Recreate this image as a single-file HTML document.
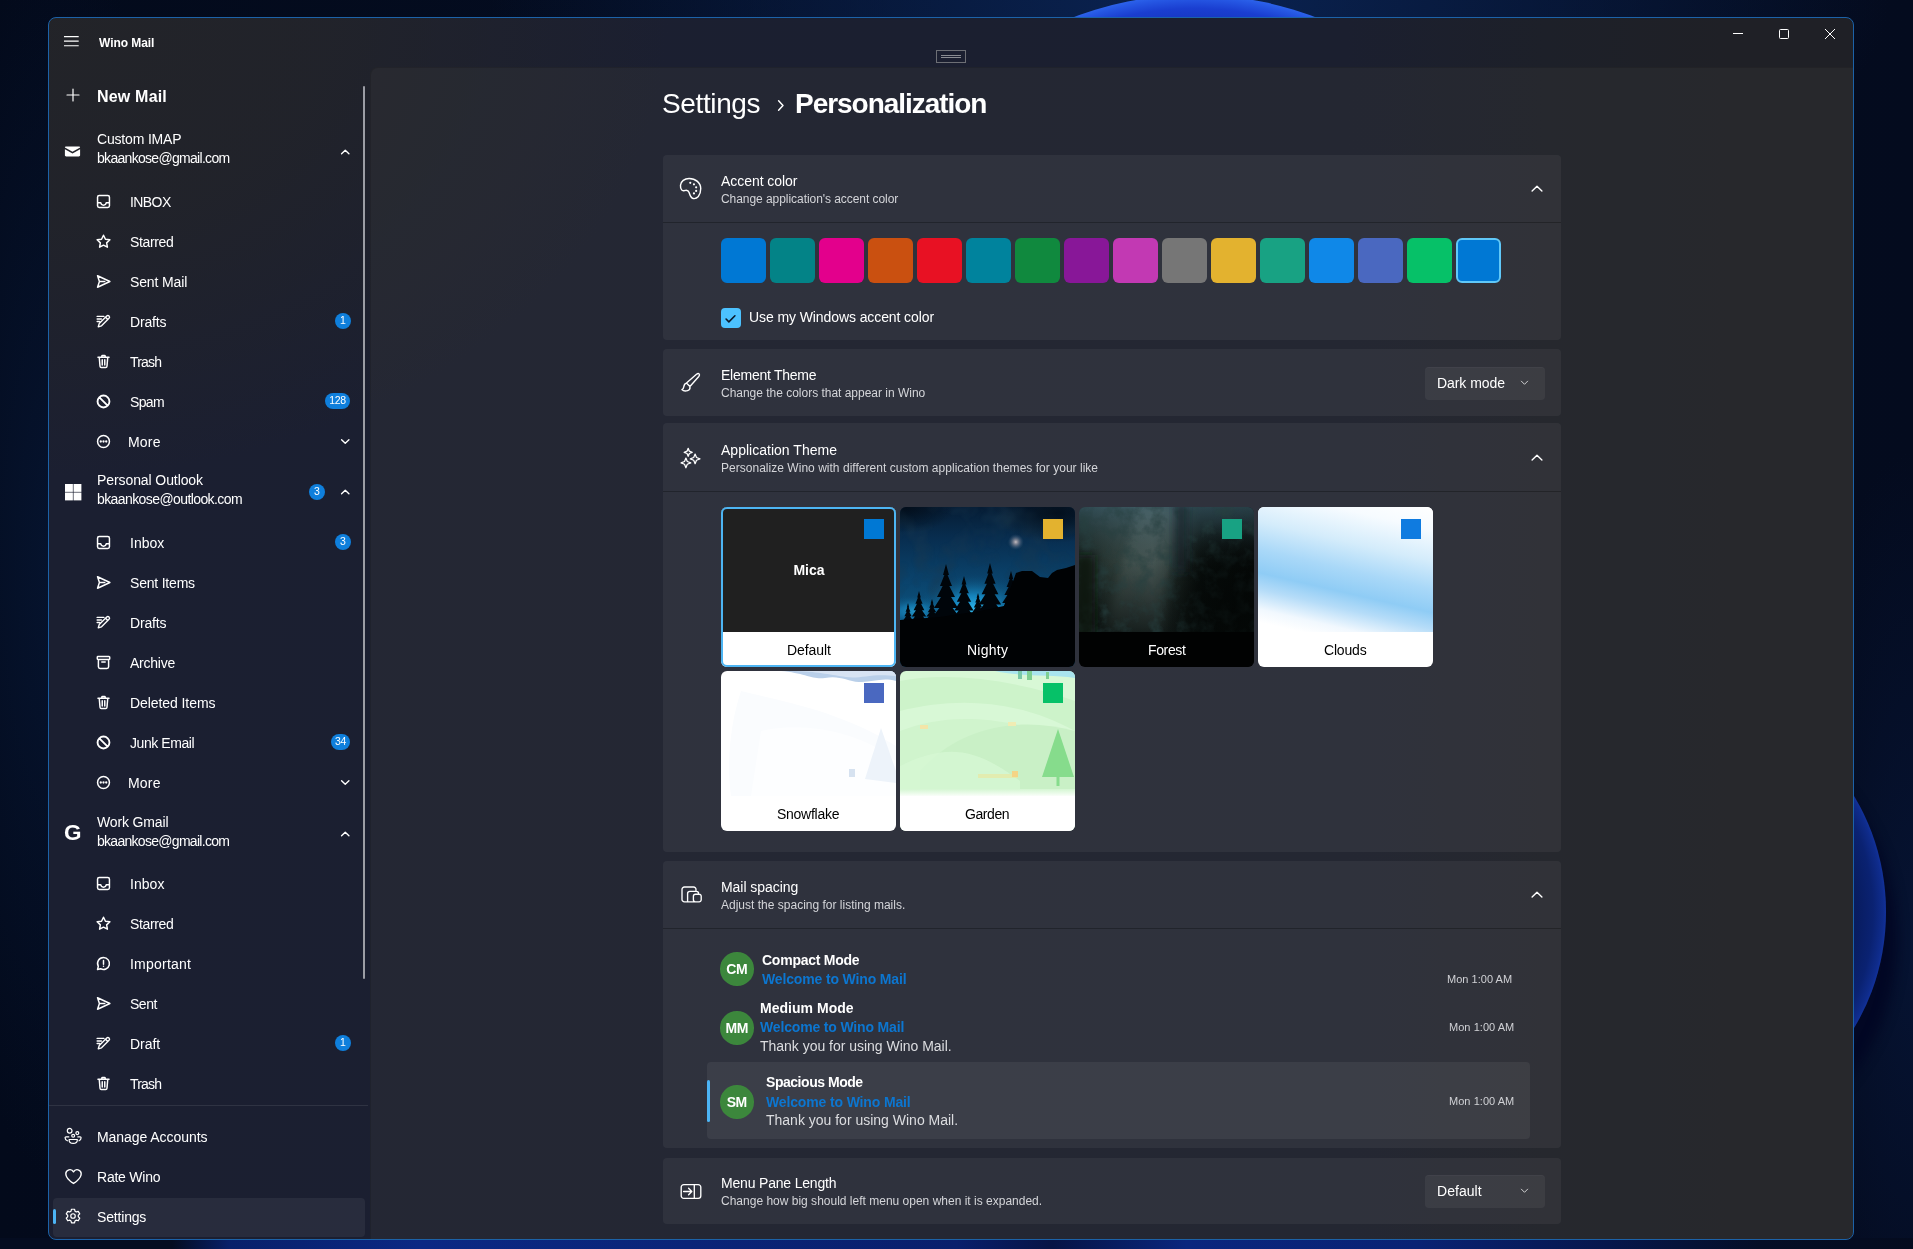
<!DOCTYPE html>
<html lang="en"><head><meta charset="utf-8"><title>Wino Mail - Settings - Personalization</title>
<style>
html,body{margin:0;padding:0;}
body{width:1913px;height:1249px;overflow:hidden;position:relative;background:#040b1c;font-family:"Liberation Sans",sans-serif;}
.b,.t,.ic{position:absolute;box-sizing:border-box;}
.t{white-space:nowrap;will-change:transform;}
.ic{display:block;overflow:visible;}
.bd{will-change:transform;background:#0f7fdc;border-radius:8px;color:#fff;font-size:10.5px;line-height:15.5px;text-align:center;letter-spacing:-0.3px;}
.av{will-change:transform;width:33.5px;height:33.5px;border-radius:50%;background:#3c873c;color:#fff;font-weight:700;font-size:14px;line-height:34px;text-align:center;letter-spacing:-0.4px;}

</style></head>
<body>
<div class="b" style="left:0;top:0;width:1913px;height:1249px;background:radial-gradient(ellipse 700px 260px at 1190px 0px, #0a2352 0%, rgba(10,35,82,0) 100%),radial-gradient(ellipse 120px 500px at 1913px 950px, #061332 0%, rgba(6,19,50,0) 100%),radial-gradient(ellipse 140px 620px at 60px 560px, #06142f 0%, rgba(6,20,47,0) 100%),linear-gradient(90deg,#030a1b 0%,#040d22 50%,#040b1e 100%);"></div>
<div class="b" style="left:853.2px;top:-4.8px;width:682.6px;height:682.6px;border-radius:50%;background:radial-gradient(circle closest-side at 50% 50%, #0a1d6b 0%, #1432b8 90%, #1a3ed0 96%, #2658e4 99%, #2c62ea 100%);"></div>
<div class="b" style="left:1514px;top:705px;width:372px;height:414px;border-radius:50%;background:radial-gradient(ellipse closest-side at 50% 50%, #06164e 0%, #081c60 84%, #0a2272 93%, #0f2c8c 98.500%, #12319a 100%);box-shadow:5px 26px 12px 6px rgba(2,7,36,0.92);"></div>
<div class="b" style="left:0;top:1238px;width:1913px;height:11px;background:linear-gradient(90deg,#040c20 0%,#040c20 9%,#08206a 12%,#0b2884 22%,#0a2478 36%,#091f6c 50%,#061445 55%,#0a267e 62%,#092274 74%,#06174c 84%,#040e26 92%,#040b1e 100%);"></div>
<div class="b" style="left:48px;top:17px;width:1806px;height:1223px;border:1px solid #1c62a8;border-radius:8px;background:radial-gradient(ellipse 620px 460px at 0px 0px, rgba(35,36,40,0.95) 0%, rgba(35,36,40,0.75) 45%, rgba(35,36,40,0) 100%),linear-gradient(90deg,#1b1f31 0%,#1b1f30 50%,#1b1f2f 72%,#1d2029 83%,#1f2026 93%,#1f2026 100%);"></div>
<div class="b" style="left:370px;top:67px;width:1483px;height:1172px;border-radius:8px 0 7px 0;border-top:1px solid rgba(0,0,0,0.12);border-left:1px solid rgba(0,0,0,0.12);background:rgba(58,58,58,0.3);"></div>
<header>
<svg class="ic" style="left:64px;top:36px;color:#fff" width="15" height="11" viewBox="0 0 15 11"><path d="M0 .6h14.7M0 5.1h14.7M0 9.700h14.7" stroke="currentColor" stroke-width="1.1" fill="none"/></svg>
<div class="t" style="top:35px;font-size:12px;line-height:17px;color:#fff;font-weight:700;letter-spacing:-0.055px;left:99.2px;">Wino Mail</div>
<svg class="ic" style="left:1732px;top:28px;color:#fff" width="12" height="12" viewBox="0 0 12 12"><path d="M1 5.500h10" stroke="currentColor" stroke-width="1" fill="none"/></svg>
<svg class="ic" style="left:1778px;top:28px;color:#fff" width="12" height="12" viewBox="0 0 12 12"><rect x="1.5" y="1.5" width="9" height="9" rx="1" stroke="currentColor" stroke-width="1" fill="none"/></svg>
<svg class="ic" style="left:1824px;top:28px;color:#fff" width="12" height="12" viewBox="0 0 12 12"><path d="M1 1l10 10M11 1L1 11" stroke="currentColor" stroke-width="1" fill="none"/></svg>
<div class="b" style="left:936px;top:50px;width:30px;height:13px;border:1px solid #6d6f75;"></div>
<div class="b" style="left:941px;top:55px;width:20px;height:3px;border-top:1px solid #8a8c92;border-bottom:1px solid #8a8c92;"></div>
</header>
<nav>
<div class="b" style="left:363px;top:86px;width:2px;height:893px;background:#9b9da5;border-radius:1px;"></div>
<svg class="ic" style="left:64.5px;top:86.5px;color:#fff;opacity:1" width="16" height="16" viewBox="0 0 20 20"><path d="M10 2.5v15M2.5 10h15" fill="none" stroke="currentColor" stroke-width="1.5" stroke-linecap="round" stroke-linejoin="round" /></svg>
<div class="t" style="top:85px;font-size:16px;line-height:23px;color:#fff;font-weight:700;letter-spacing:0.191px;left:97.2px;">New Mail</div>
<svg class="ic" style="left:63.4px;top:141.6px;color:#fff;opacity:1" width="19" height="19" viewBox="0 0 20 20"><path d="M2 5.900C2 5.200 2.600 4.800 3.300 4.800h13.400c.7 0 1.300.4 1.300 1.100L10 10.300z" fill="currentColor"/><path d="M2 7.700l8 4.300 8-4.300v6.300c0 .7-.6 1.200-1.300 1.200H3.300c-.7 0-1.300-.5-1.300-1.200z" fill="currentColor"/></svg>
<div class="t" style="top:129px;font-size:14px;line-height:20px;color:#fff;letter-spacing:-0.178px;left:97.2px;">Custom IMAP</div>
<div class="t" style="top:148px;font-size:14px;line-height:20px;color:#fff;letter-spacing:-0.697px;left:97.2px;">bkaankose@gmail.com</div>
<svg class="ic" style="left:339.55px;top:146.55px;color:#fff;opacity:1" width="10.5" height="10.5" viewBox="0 0 20 20"><path d="M3 13L10 6l7 7" fill="none" stroke="currentColor" stroke-width="2.6" stroke-linecap="round" stroke-linejoin="round" /></svg>
<svg class="ic" style="left:95.1px;top:192.9px;color:#fff;opacity:1" width="17" height="17" viewBox="0 0 20 20"><path d="M5 3h10a2 2 0 0 1 2 2v10a2 2 0 0 1-2 2H5a2 2 0 0 1-2-2V5a2 2 0 0 1 2-2zM3.2 11.5h3.6c.2 1.6 1.5 2.8 3.2 2.8s3-1.2 3.2-2.8h3.6" fill="none" stroke="currentColor" stroke-width="1.75" stroke-linecap="round" stroke-linejoin="round" /></svg>
<div class="t" style="top:192px;font-size:14px;line-height:20px;color:#fff;letter-spacing:-0.576px;left:130.2px;">INBOX</div>
<svg class="ic" style="left:95.1px;top:232.9px;color:#fff;opacity:1" width="17" height="17" viewBox="0 0 20 20"><path d="M10 2.6l2.3 4.7 5.2.7-3.8 3.6.9 5.1L10 14.3l-4.6 2.4.9-5.1L2.5 8l5.2-.7z" fill="none" stroke="currentColor" stroke-width="1.75" stroke-linecap="round" stroke-linejoin="round" /></svg>
<div class="t" style="top:232px;font-size:14px;line-height:20px;color:#fff;letter-spacing:-0.360px;left:130.2px;">Starred</div>
<svg class="ic" style="left:95.1px;top:272.9px;color:#fff;opacity:1" width="17" height="17" viewBox="0 0 20 20"><path d="M3 3.2l14.5 6.8L3 16.8l2.2-6.8zM5.2 10h6.3" fill="none" stroke="currentColor" stroke-width="1.75" stroke-linecap="round" stroke-linejoin="round" /></svg>
<div class="t" style="top:272px;font-size:14px;line-height:20px;color:#fff;letter-spacing:-0.129px;left:130.2px;">Sent Mail</div>
<svg class="ic" style="left:95.1px;top:312.9px;color:#fff;opacity:1" width="17" height="17" viewBox="0 0 20 20"><path d="M2.5 4h8M2.5 7h5M2.5 10h3M13.8 3.6a1.9 1.9 0 0 1 2.7 2.7l-8.8 8.8-3.9 1.2 1.2-3.9zM12.4 5l2.7 2.7" fill="none" stroke="currentColor" stroke-width="1.6" stroke-linecap="round" stroke-linejoin="round" /></svg>
<div class="t" style="top:312px;font-size:14px;line-height:20px;color:#fff;letter-spacing:-0.174px;left:130.2px;">Drafts</div>
<div class="b bd" style="left:334.9px;top:312.85px;width:15.5px;height:15.5px;">1</div>
<svg class="ic" style="left:95.1px;top:352.9px;color:#fff;opacity:1" width="17" height="17" viewBox="0 0 20 20"><path d="M3.5 5h13M8 5V3.8c0-.5.4-.8.8-.8h2.4c.4 0 .8.3.8.8V5M5 5l.9 10.6c.1.8.7 1.4 1.5 1.4h5.2c.8 0 1.4-.6 1.5-1.4L15 5M8.5 8v6M11.5 8v6" fill="none" stroke="currentColor" stroke-width="1.75" stroke-linecap="round" stroke-linejoin="round" /></svg>
<div class="t" style="top:352px;font-size:14px;line-height:20px;color:#fff;letter-spacing:-0.816px;left:130.2px;">Trash</div>
<svg class="ic" style="left:95.1px;top:392.9px;color:#fff;opacity:1" width="17" height="17" viewBox="0 0 20 20"><path d="M10 3a7 7 0 1 0 0 14 7 7 0 0 0 0-14zM5.1 5.1l9.8 9.8" fill="none" stroke="currentColor" stroke-width="2.2" stroke-linecap="round" stroke-linejoin="round" /></svg>
<div class="t" style="top:392px;font-size:14px;line-height:20px;color:#fff;letter-spacing:-0.670px;left:130.2px;">Spam</div>
<div class="b bd" style="left:324.9px;top:392.85px;width:25px;height:15.5px;">128</div>
<svg class="ic" style="left:95.1px;top:432.9px;color:#fff;opacity:1" width="17" height="17" viewBox="0 0 20 20"><path d="M10 3a7 7 0 1 0 0 14 7 7 0 0 0 0-14z" fill="none" stroke="currentColor" stroke-width="1.75" stroke-linecap="round" stroke-linejoin="round" /><circle cx="6.800" cy="10" r="1.350" fill="currentColor"/><circle cx="10" cy="10" r="1.350" fill="currentColor"/><circle cx="13.200" cy="10" r="1.350" fill="currentColor"/></svg>
<div class="t" style="top:432px;font-size:14px;line-height:20px;color:#fff;letter-spacing:0.173px;left:128.2px;">More</div>
<svg class="ic" style="left:339.55px;top:436.25px;color:#fff;opacity:1" width="10.5" height="10.5" viewBox="0 0 20 20"><path d="M3 7L10 14l7-7" fill="none" stroke="currentColor" stroke-width="2.6" stroke-linecap="round" stroke-linejoin="round" /></svg>
<svg class="ic" style="left:64.7px;top:483.8px;color:#fff;opacity:1" width="16.4" height="16.4" viewBox="0 0 20 20"><rect x="0" y="0" width="9.600" height="9.600" fill="currentColor"/><rect x="10.400" y="0" width="9.600" height="9.600" fill="currentColor"/><rect x="0" y="10.400" width="9.600" height="9.600" fill="currentColor"/><rect x="10.400" y="10.400" width="9.600" height="9.600" fill="currentColor"/></svg>
<div class="t" style="top:470px;font-size:14px;line-height:20px;color:#fff;letter-spacing:-0.088px;left:97.2px;">Personal Outlook</div>
<div class="t" style="top:489px;font-size:14px;line-height:20px;color:#fff;letter-spacing:-0.592px;left:97.2px;">bkaankose@outlook.com</div>
<svg class="ic" style="left:339.55px;top:487.05px;color:#fff;opacity:1" width="10.5" height="10.5" viewBox="0 0 20 20"><path d="M3 13L10 6l7 7" fill="none" stroke="currentColor" stroke-width="2.6" stroke-linecap="round" stroke-linejoin="round" /></svg>
<div class="b bd" style="left:308.85px;top:484.25px;width:15.5px;height:15.5px;">3</div>
<svg class="ic" style="left:95.1px;top:533.9px;color:#fff;opacity:1" width="17" height="17" viewBox="0 0 20 20"><path d="M5 3h10a2 2 0 0 1 2 2v10a2 2 0 0 1-2 2H5a2 2 0 0 1-2-2V5a2 2 0 0 1 2-2zM3.2 11.5h3.6c.2 1.6 1.5 2.8 3.2 2.8s3-1.2 3.2-2.8h3.6" fill="none" stroke="currentColor" stroke-width="1.75" stroke-linecap="round" stroke-linejoin="round" /></svg>
<div class="t" style="top:533px;font-size:14px;line-height:20px;color:#fff;letter-spacing:0.010px;left:130.2px;">Inbox</div>
<div class="b bd" style="left:334.9px;top:533.85px;width:15.5px;height:15.5px;">3</div>
<svg class="ic" style="left:95.1px;top:573.9px;color:#fff;opacity:1" width="17" height="17" viewBox="0 0 20 20"><path d="M3 3.2l14.5 6.8L3 16.8l2.2-6.8zM5.2 10h6.3" fill="none" stroke="currentColor" stroke-width="1.75" stroke-linecap="round" stroke-linejoin="round" /></svg>
<div class="t" style="top:573px;font-size:14px;line-height:20px;color:#fff;letter-spacing:-0.202px;left:130.2px;">Sent Items</div>
<svg class="ic" style="left:95.1px;top:613.9px;color:#fff;opacity:1" width="17" height="17" viewBox="0 0 20 20"><path d="M2.5 4h8M2.5 7h5M2.5 10h3M13.8 3.6a1.9 1.9 0 0 1 2.7 2.7l-8.8 8.8-3.9 1.2 1.2-3.9zM12.4 5l2.7 2.7" fill="none" stroke="currentColor" stroke-width="1.6" stroke-linecap="round" stroke-linejoin="round" /></svg>
<div class="t" style="top:613px;font-size:14px;line-height:20px;color:#fff;letter-spacing:-0.174px;left:130.2px;">Drafts</div>
<svg class="ic" style="left:95.1px;top:653.9px;color:#fff;opacity:1" width="17" height="17" viewBox="0 0 20 20"><path d="M3.5 3h13a.8.8 0 0 1 .8.8v1.9a.8.8 0 0 1-.8.8h-13a.8.8 0 0 1-.8-.8V3.800a.8.8 0 0 1 .8-.8zM4 6.500v8.500a2 2 0 0 0 2 2h8a2 2 0 0 0 2-2V6.500M8 9.500h4" fill="none" stroke="currentColor" stroke-width="1.75" stroke-linecap="round" stroke-linejoin="round" /></svg>
<div class="t" style="top:653px;font-size:14px;line-height:20px;color:#fff;letter-spacing:-0.241px;left:130.2px;">Archive</div>
<svg class="ic" style="left:95.1px;top:693.9px;color:#fff;opacity:1" width="17" height="17" viewBox="0 0 20 20"><path d="M3.5 5h13M8 5V3.8c0-.5.4-.8.8-.8h2.4c.4 0 .8.3.8.8V5M5 5l.9 10.6c.1.8.7 1.4 1.5 1.4h5.2c.8 0 1.4-.6 1.5-1.4L15 5M8.5 8v6M11.5 8v6" fill="none" stroke="currentColor" stroke-width="1.75" stroke-linecap="round" stroke-linejoin="round" /></svg>
<div class="t" style="top:693px;font-size:14px;line-height:20px;color:#fff;letter-spacing:-0.075px;left:130.2px;">Deleted Items</div>
<svg class="ic" style="left:95.1px;top:733.9px;color:#fff;opacity:1" width="17" height="17" viewBox="0 0 20 20"><path d="M10 3a7 7 0 1 0 0 14 7 7 0 0 0 0-14zM5.1 5.1l9.8 9.8" fill="none" stroke="currentColor" stroke-width="2.2" stroke-linecap="round" stroke-linejoin="round" /></svg>
<div class="t" style="top:733px;font-size:14px;line-height:20px;color:#fff;letter-spacing:-0.427px;left:130.2px;">Junk Email</div>
<div class="b bd" style="left:331.15px;top:733.85px;width:19px;height:15.5px;">34</div>
<svg class="ic" style="left:95.1px;top:773.9px;color:#fff;opacity:1" width="17" height="17" viewBox="0 0 20 20"><path d="M10 3a7 7 0 1 0 0 14 7 7 0 0 0 0-14z" fill="none" stroke="currentColor" stroke-width="1.75" stroke-linecap="round" stroke-linejoin="round" /><circle cx="6.800" cy="10" r="1.350" fill="currentColor"/><circle cx="10" cy="10" r="1.350" fill="currentColor"/><circle cx="13.200" cy="10" r="1.350" fill="currentColor"/></svg>
<div class="t" style="top:773px;font-size:14px;line-height:20px;color:#fff;letter-spacing:0.173px;left:128.2px;">More</div>
<svg class="ic" style="left:339.55px;top:777.25px;color:#fff;opacity:1" width="10.5" height="10.5" viewBox="0 0 20 20"><path d="M3 7L10 14l7-7" fill="none" stroke="currentColor" stroke-width="2.6" stroke-linecap="round" stroke-linejoin="round" /></svg>
<div class="t" style="top:816px;font-size:22.5px;line-height:33px;color:#fff;font-weight:700;left:64px;">G</div>
<div class="t" style="top:812px;font-size:14px;line-height:20px;color:#fff;letter-spacing:-0.146px;left:97.2px;">Work Gmail</div>
<div class="t" style="top:831px;font-size:14px;line-height:20px;color:#fff;letter-spacing:-0.712px;left:97.2px;">bkaankose@gmail.com</div>
<svg class="ic" style="left:339.55px;top:829.05px;color:#fff;opacity:1" width="10.5" height="10.5" viewBox="0 0 20 20"><path d="M3 13L10 6l7 7" fill="none" stroke="currentColor" stroke-width="2.6" stroke-linecap="round" stroke-linejoin="round" /></svg>
<svg class="ic" style="left:95.1px;top:874.9px;color:#fff;opacity:1" width="17" height="17" viewBox="0 0 20 20"><path d="M5 3h10a2 2 0 0 1 2 2v10a2 2 0 0 1-2 2H5a2 2 0 0 1-2-2V5a2 2 0 0 1 2-2zM3.2 11.5h3.6c.2 1.6 1.5 2.8 3.2 2.8s3-1.2 3.2-2.8h3.6" fill="none" stroke="currentColor" stroke-width="1.75" stroke-linecap="round" stroke-linejoin="round" /></svg>
<div class="t" style="top:874px;font-size:14px;line-height:20px;color:#fff;letter-spacing:0.050px;left:130.2px;">Inbox</div>
<svg class="ic" style="left:95.1px;top:914.9px;color:#fff;opacity:1" width="17" height="17" viewBox="0 0 20 20"><path d="M10 2.6l2.3 4.7 5.2.7-3.8 3.6.9 5.1L10 14.3l-4.6 2.4.9-5.1L2.5 8l5.2-.7z" fill="none" stroke="currentColor" stroke-width="1.75" stroke-linecap="round" stroke-linejoin="round" /></svg>
<div class="t" style="top:914px;font-size:14px;line-height:20px;color:#fff;letter-spacing:-0.360px;left:130.2px;">Starred</div>
<svg class="ic" style="left:95.1px;top:954.9px;color:#fff;opacity:1" width="17" height="17" viewBox="0 0 20 20"><path d="M10 3a7 7 0 1 1-3.400 13.100L3 17l.9-3.600A7 7 0 0 1 10 3zM10 6.500v4.500" fill="none" stroke="currentColor" stroke-width="1.75" stroke-linecap="round" stroke-linejoin="round" /><circle cx="10" cy="13.300" r=".9" fill="currentColor"/></svg>
<div class="t" style="top:954px;font-size:14px;line-height:20px;color:#fff;letter-spacing:0.218px;left:130.2px;">Important</div>
<svg class="ic" style="left:95.1px;top:994.9px;color:#fff;opacity:1" width="17" height="17" viewBox="0 0 20 20"><path d="M3 3.2l14.5 6.8L3 16.8l2.2-6.8zM5.2 10h6.3" fill="none" stroke="currentColor" stroke-width="1.75" stroke-linecap="round" stroke-linejoin="round" /></svg>
<div class="t" style="top:994px;font-size:14px;line-height:20px;color:#fff;letter-spacing:-0.478px;left:130.2px;">Sent</div>
<svg class="ic" style="left:95.1px;top:1034.9px;color:#fff;opacity:1" width="17" height="17" viewBox="0 0 20 20"><path d="M2.5 4h8M2.5 7h5M2.5 10h3M13.8 3.6a1.9 1.9 0 0 1 2.7 2.7l-8.8 8.8-3.9 1.2 1.2-3.9zM12.4 5l2.7 2.7" fill="none" stroke="currentColor" stroke-width="1.6" stroke-linecap="round" stroke-linejoin="round" /></svg>
<div class="t" style="top:1034px;font-size:14px;line-height:20px;color:#fff;letter-spacing:-0.029px;left:130.2px;">Draft</div>
<div class="b bd" style="left:334.9px;top:1034.85px;width:15.5px;height:15.5px;">1</div>
<svg class="ic" style="left:95.1px;top:1074.9px;color:#fff;opacity:1" width="17" height="17" viewBox="0 0 20 20"><path d="M3.5 5h13M8 5V3.8c0-.5.4-.8.8-.8h2.4c.4 0 .8.3.8.8V5M5 5l.9 10.6c.1.8.7 1.4 1.5 1.4h5.2c.8 0 1.4-.6 1.5-1.4L15 5M8.5 8v6M11.5 8v6" fill="none" stroke="currentColor" stroke-width="1.75" stroke-linecap="round" stroke-linejoin="round" /></svg>
<div class="t" style="top:1074px;font-size:14px;line-height:20px;color:#fff;letter-spacing:-0.796px;left:130.2px;">Trash</div>
<div class="b" style="left:49px;top:1105px;width:319px;height:1px;background:rgba(255,255,255,0.09);"></div>
<div class="b" style="left:53px;top:1198px;width:312px;height:39px;border-radius:4px;background:rgba(255,255,255,0.06);"></div>
<div class="b" style="left:53px;top:1209px;width:3px;height:15px;border-radius:1.5px;background:#4cb4f5;"></div>
<svg class="ic" style="left:64px;top:1127px;color:#fff;opacity:1" width="18" height="18" viewBox="0 0 20 20"><path d="M6.300 1.600a2.600 2.600 0 1 1 0 5.200 2.600 2.600 0 0 1 0-5.200zM14.800 5.200a1.600 1.600 0 1 1 0 3.200 1.600 1.600 0 0 1 0-3.200zM10.200 8.100a1.600 1.600 0 1 1 0 3.200 1.600 1.600 0 0 1 0-3.200zM5.700 13.900h9.100v.600c0 2.200-2 3.800-4.550 3.800s-4.550-1.600-4.550-3.800zM5.300 11H2.200c-.6 0-1 .4-1 1 0 1.500.9 2.700 2.600 3.300M15.400 11h2.600c.6 0 1 .4 1 1 0 1.500-.9 2.700-2.300 3.300" fill="none" stroke="currentColor" stroke-width="1.35" stroke-linecap="round" stroke-linejoin="round" /></svg>
<div class="t" style="top:1127px;font-size:14px;line-height:20px;color:#fff;letter-spacing:-0.060px;left:97.1px;">Manage Accounts</div>
<svg class="ic" style="left:63.9px;top:1166.7px;color:#fff;opacity:1" width="19" height="19" viewBox="0 0 20 20"><path d="M10 17.300S1.900 12.600 1.900 7.200A4.300 4.300 0 0 1 10 5.100a4.300 4.300 0 0 1 8.100 2.100C18.100 12.600 10 17.300 10 17.300z" fill="none" stroke="currentColor" stroke-width="1.45" stroke-linecap="round" stroke-linejoin="round" /></svg>
<div class="t" style="top:1167px;font-size:14px;line-height:20px;color:#fff;letter-spacing:-0.229px;left:97.1px;">Rate Wino</div>
<svg class="ic" style="left:64px;top:1206.8px;color:#fff;opacity:1" width="18" height="18" viewBox="0 0 20 20"><path d="M8.300 2.500h3.400l.5 2.100 1.500.9 2.100-.7 1.700 2.900-1.600 1.500v1.700l1.600 1.500-1.700 2.900-2.100-.7-1.500.9-.5 2.100H8.300l-.5-2.100-1.500-.9-2.100.7-1.700-2.900 1.600-1.500V9.200L2.500 7.700l1.700-2.900 2.100.7 1.500-.9zM10 7.500a2.500 2.500 0 1 0 0 5 2.500 2.500 0 0 0 0-5z" fill="none" stroke="currentColor" stroke-width="1.35" stroke-linecap="round" stroke-linejoin="round" /></svg>
<div class="t" style="top:1207px;font-size:14px;line-height:20px;color:#fff;letter-spacing:-0.174px;left:97.1px;">Settings</div>
</nav>
<main>
<div class="t" style="top:83px;font-size:28px;line-height:41px;color:#fff;letter-spacing:-0.371px;left:661.9px;">Settings</div>
<svg class="ic" style="left:772.5px;top:98.3px;color:#fff;opacity:1" width="15" height="15" viewBox="0 0 20 20"><path d="M7.500 3.800l5.800 6.200-5.800 6.200" fill="none" stroke="currentColor" stroke-width="2" stroke-linecap="round" stroke-linejoin="round" /></svg>
<div class="t" style="top:83px;font-size:28px;line-height:41px;color:#fff;font-weight:700;letter-spacing:-1.036px;left:795.4px;">Personalization</div>
<div class="b" style="left:663px;top:155px;width:898px;height:185px;border-radius:4px;background:rgba(255,255,255,0.05);"></div>
<svg class="ic" style="left:679.3px;top:176.5px;color:#fff;opacity:1" width="23" height="23" viewBox="0 0 20 20"><path d="M8.800 1.300C14.500 1.300 18.900 5 18.900 10c0 3-.9 5.500-2.100 7-1.200 1.400-3 2-4.500 1.700-2-.4-2.700-2.700-3.500-5.200-.6-1.700-2.300-2.200-4-1.700-1.200.3-2 .1-2.500-.6C1.500 10.200 1.200 8.600 1.300 7.200 1.600 3.800 4.800 1.300 8.800 1.300z" fill="none" stroke="currentColor" stroke-width="1.25" stroke-linecap="round" stroke-linejoin="round" /><circle cx="9.800" cy="5.100" r=".95" fill="currentColor"/><circle cx="13" cy="6.400" r=".95" fill="currentColor"/><circle cx="14.900" cy="9" r=".95" fill="currentColor"/><circle cx="14.900" cy="12.100" r=".95" fill="currentColor"/><circle cx="13" cy="14.300" r=".95" fill="currentColor"/></svg>
<div class="t" style="top:171px;font-size:14px;line-height:20px;color:#fff;letter-spacing:-0.054px;left:721px;">Accent color</div>
<div class="t" style="top:191px;font-size:12px;line-height:17px;color:#d4d5d9;letter-spacing:-0.054px;left:721px;">Change application&apos;s accent color</div>
<svg class="ic" style="left:1530px;top:181.5px;color:#fff;opacity:1" width="14" height="14" viewBox="0 0 20 20"><path d="M3 13L10 6l7 7" fill="none" stroke="currentColor" stroke-width="2.0" stroke-linecap="round" stroke-linejoin="round" /></svg>
<div class="b" style="left:663px;top:222px;width:898px;height:1px;background:rgba(0,0,0,0.28);"></div>
<div class="b" style="left:721px;top:238px;width:45px;height:45px;border-radius:6px;background:#0078d4;"></div>
<div class="b" style="left:770px;top:238px;width:45px;height:45px;border-radius:6px;background:#038387;"></div>
<div class="b" style="left:819px;top:238px;width:45px;height:45px;border-radius:6px;background:#e3008c;"></div>
<div class="b" style="left:868px;top:238px;width:45px;height:45px;border-radius:6px;background:#ca5010;"></div>
<div class="b" style="left:917px;top:238px;width:45px;height:45px;border-radius:6px;background:#e81123;"></div>
<div class="b" style="left:966px;top:238px;width:45px;height:45px;border-radius:6px;background:#00839d;"></div>
<div class="b" style="left:1015px;top:238px;width:45px;height:45px;border-radius:6px;background:#10893e;"></div>
<div class="b" style="left:1064px;top:238px;width:45px;height:45px;border-radius:6px;background:#881798;"></div>
<div class="b" style="left:1113px;top:238px;width:45px;height:45px;border-radius:6px;background:#c239b3;"></div>
<div class="b" style="left:1162px;top:238px;width:45px;height:45px;border-radius:6px;background:#767676;"></div>
<div class="b" style="left:1211px;top:238px;width:45px;height:45px;border-radius:6px;background:#e3b22f;"></div>
<div class="b" style="left:1260px;top:238px;width:45px;height:45px;border-radius:6px;background:#18a283;"></div>
<div class="b" style="left:1309px;top:238px;width:45px;height:45px;border-radius:6px;background:#0f88e8;"></div>
<div class="b" style="left:1358px;top:238px;width:45px;height:45px;border-radius:6px;background:#4a68c0;"></div>
<div class="b" style="left:1407px;top:238px;width:45px;height:45px;border-radius:6px;background:#06c168;"></div>
<div class="b" style="left:1456px;top:238px;width:45px;height:45px;border-radius:6px;background:#0078d4;border:2px solid #60c8f8;"></div>
<div class="b" style="left:721px;top:308px;width:20px;height:20px;border-radius:4px;background:#4cc2ff;"></div>
<svg class="ic" style="left:722.3px;top:309.5px;color:#0b1a2a;opacity:1" width="17" height="17" viewBox="0 0 20 20"><path d="M4.800 10.600l3.300 3.300L15.200 6.800" fill="none" stroke="currentColor" stroke-width="1.9" stroke-linecap="round" stroke-linejoin="round" /></svg>
<div class="t" style="top:307px;font-size:14px;line-height:20px;color:#fff;letter-spacing:-0.093px;left:749.3px;">Use my Windows accent color</div>
<div class="b" style="left:663px;top:349px;width:898px;height:67px;border-radius:4px;background:rgba(255,255,255,0.05);"></div>
<svg class="ic" style="left:679.3px;top:370.5px;color:#fff;opacity:1" width="23" height="23" viewBox="0 0 20 20"><path d="M17.500 2.500c.6.6.3 1.500-.3 2.300L9.500 13.500l-3-3L15.200 2.800c.8-.6 1.700-.9 2.300-.3zM6.500 10.500l3 3c.3 1.500-.5 3-2 3.500-1.800.6-4 .2-5-.8 1.200-.5 1.500-1.400 1.700-2.700.2-1.500.9-2.700 2.300-3z" fill="none" stroke="currentColor" stroke-width="1.2" stroke-linecap="round" stroke-linejoin="round" /></svg>
<div class="t" style="top:365px;font-size:14px;line-height:20px;color:#fff;letter-spacing:-0.252px;left:721px;">Element Theme</div>
<div class="t" style="top:385px;font-size:12px;line-height:17px;color:#d4d5d9;letter-spacing:-0.016px;left:721px;">Change the colors that appear in Wino</div>
<div class="b" style="left:1425px;top:367px;width:120px;height:33px;border-radius:4px;background:rgba(255,255,255,0.055);border-top:1px solid rgba(255,255,255,0.03);"></div>
<div class="t" style="top:373px;font-size:14px;line-height:20px;color:#fff;letter-spacing:-0.063px;left:1437.2px;">Dark mode</div>
<svg class="ic" style="left:1520.1px;top:378.4px;color:#fff;opacity:1" width="9" height="9" viewBox="0 0 20 20"><path d="M3 7L10 14l7-7" fill="none" stroke="currentColor" stroke-width="2.1" stroke-linecap="round" stroke-linejoin="round" opacity="0.8"/></svg>
<div class="b" style="left:663px;top:423px;width:898px;height:429px;border-radius:4px;background:rgba(255,255,255,0.05);"></div>
<svg class="ic" style="left:679.3px;top:445.5px;color:#fff;opacity:1" width="23" height="23" viewBox="0 0 20 20"><path d="M8 2l1 2.500L11.500 5.500 9 6.500 8 9 7 6.500 4.500 5.500 7 4.500zM14 7l1.200 3 3 1.200-3 1.200L14 15.400l-1.200-3-3-1.200 3-1.200zM6 10.500l1.200 3 3 1.200-3 1.200L6 18.900l-1.200-3-3-1.200 3-1.200z" fill="none" stroke="currentColor" stroke-width="1.1" stroke-linecap="round" stroke-linejoin="round" /></svg>
<div class="t" style="top:440px;font-size:14px;line-height:20px;color:#fff;letter-spacing:0.017px;left:721px;">Application Theme</div>
<div class="t" style="top:460px;font-size:12px;line-height:17px;color:#d4d5d9;letter-spacing:0.025px;left:721px;">Personalize Wino with different custom application themes for your like</div>
<svg class="ic" style="left:1530px;top:450.5px;color:#fff;opacity:1" width="14" height="14" viewBox="0 0 20 20"><path d="M3 13L10 6l7 7" fill="none" stroke="currentColor" stroke-width="2.0" stroke-linecap="round" stroke-linejoin="round" /></svg>
<div class="b" style="left:663px;top:491px;width:898px;height:1px;background:rgba(0,0,0,0.28);"></div>
<div class="b" style="left:721px;top:507px;width:175px;height:160px;border-radius:6px;background:#fff;overflow:hidden;"><div class="b" style="left:0;top:0;width:175px;height:125px;background:#202020;"></div></div><div class="b" style="left:721px;top:507px;width:175px;height:160px;border-radius:6px;border:2px solid #4db5f3;"></div><div class="b" style="left:864px;top:519px;width:20px;height:20px;background:#0078d4;"></div><svg class="ic" style="left:900px;top:507px;border-radius:6px;overflow:hidden" width="175" height="160" viewBox="0 0 175 160">
<defs><linearGradient id="ns" x1="0" y1="0" x2="0" y2="1"><stop offset="0" stop-color="#061d35"/><stop offset="0.2" stop-color="#082e50"/><stop offset="0.42" stop-color="#0a4068"/><stop offset="0.66" stop-color="#0c517c"/></linearGradient>
<radialGradient id="ng" cx="0.5" cy="0.5" r="0.5"><stop offset="0" stop-color="#2fb8ee"/><stop offset="0.4" stop-color="#178dc8" stop-opacity="0.85"/><stop offset="1" stop-color="#0b4c74" stop-opacity="0"/></radialGradient>
<radialGradient id="nm" cx="0.5" cy="0.5" r="0.5"><stop offset="0" stop-color="#e6d6d4"/><stop offset="0.35" stop-color="#a9a2ab" stop-opacity="0.7"/><stop offset="1" stop-color="#3a5a7a" stop-opacity="0"/></radialGradient>
<radialGradient id="nd" cx="0.5" cy="0.5" r="0.5"><stop offset="0" stop-color="#020a14" stop-opacity="0.8"/><stop offset="1" stop-color="#020a14" stop-opacity="0"/></radialGradient>
<filter id="nn" x="0" y="0" width="1" height="1"><feTurbulence type="fractalNoise" baseFrequency="0.035" numOctaves="3" seed="7"/><feColorMatrix type="matrix" values="0 0 0 0 0.01  0 0 0 0 0.04  0 0 0 0 0.08  0 0 0 -2.2 1.25"/></filter></defs>
<rect width="175" height="160" fill="url(#ns)"/>
<rect width="175" height="115" filter="url(#nn)" opacity="0.75"/>
<ellipse cx="155" cy="6" rx="60" ry="30" fill="url(#nd)"/><ellipse cx="5" cy="0" rx="50" ry="26" fill="url(#nd)"/>
<ellipse cx="74" cy="103" rx="58" ry="36" fill="url(#ng)"/>
<ellipse cx="14" cy="104" rx="34" ry="16" fill="url(#ng)" opacity="0.65"/>
<circle cx="115.800" cy="35" r="8" fill="url(#nm)" opacity="0.85"/>
<polygon points="46.0,57.0 49.0,68.0 47.6,68.0 52.0,79.0 49.3,79.0 55.0,90.0 51.0,90.0 58.0,101.0 52.6,101.0 61.0,112.0 31.0,112.0 39.4,101.0 34.0,101.0 41.0,90.0 37.0,90.0 42.7,79.0 40.0,79.0 44.4,68.0 43.0,68.0" fill="#00050a"/><polygon points="64.0,69.0 66.4,77.6 65.3,77.6 68.8,86.2 66.6,86.2 71.2,94.8 68.0,94.8 73.6,103.4 69.3,103.4 76.0,112.0 52.0,112.0 58.7,103.4 54.4,103.4 60.0,94.8 56.8,94.8 61.4,86.2 59.2,86.2 62.7,77.6 61.6,77.6" fill="#00050a"/><polygon points="90.0,56.0 92.8,66.4 91.5,66.4 95.6,76.8 93.1,76.8 98.4,87.2 94.6,87.2 101.2,97.6 96.2,97.6 104.0,108.0 76.0,108.0 83.8,97.6 78.8,97.6 85.4,87.2 81.6,87.2 86.9,76.8 84.4,76.8 88.5,66.4 87.2,66.4" fill="#00050a"/><polygon points="111.0,64.0 113.2,72.0 112.2,72.0 115.4,80.0 113.4,80.0 117.6,88.0 114.6,88.0 119.8,96.0 115.8,96.0 122.0,104.0 100.0,104.0 106.2,96.0 102.2,96.0 107.4,88.0 104.4,88.0 108.6,80.0 106.6,80.0 109.8,72.0 108.8,72.0" fill="#00050a"/><polygon points="19.0,84.0 20.8,90.4 20.0,90.4 22.6,96.8 21.0,96.8 24.4,103.2 22.0,103.2 26.2,109.6 23.0,109.6 28.0,116.0 10.0,116.0 15.0,109.6 11.8,109.6 16.0,103.2 13.6,103.2 17.0,96.8 15.4,96.8 18.0,90.4 17.2,90.4" fill="#00050a"/><polygon points="32.0,92.0 33.4,96.4 32.8,96.4 34.8,100.8 33.5,100.8 36.2,105.2 34.3,105.2 37.6,109.6 35.1,109.6 39.0,114.0 25.0,114.0 28.9,109.6 26.4,109.6 29.7,105.2 27.8,105.2 30.5,100.8 29.2,100.8 31.2,96.4 30.6,96.4" fill="#00050a"/><polygon points="78.0,86.0 79.4,90.8 78.8,90.8 80.8,95.6 79.5,95.6 82.2,100.4 80.3,100.4 83.6,105.2 81.1,105.2 85.0,110.0 71.0,110.0 74.9,105.2 72.4,105.2 75.7,100.4 73.8,100.4 76.5,95.6 75.2,95.6 77.2,90.8 76.6,90.8" fill="#00050a"/><polygon points="8.0,96.0 9.2,100.4 8.7,100.4 10.4,104.8 9.3,104.8 11.6,109.2 10.0,109.2 12.8,113.6 10.6,113.6 14.0,118.0 2.0,118.0 5.4,113.6 3.2,113.6 6.0,109.2 4.4,109.2 6.7,104.8 5.6,104.8 7.3,100.4 6.8,100.4" fill="#00050a"/>
<path d="M0 113 L40 110 L80 104 L104 99 L116 66 L122 64 L132 64 L140 70 L148 71 L152 66 L157 63 L166 61 L175 58 L175 160 L0 160Z" fill="#000204"/>
</svg><div class="b" style="left:1043px;top:519px;width:20px;height:20px;background:#e3b22f;"></div><svg class="ic" style="left:1079px;top:507px;border-radius:6px;overflow:hidden" width="175" height="160" viewBox="0 0 175 160">
<defs><linearGradient id="fb" x1="0" y1="0" x2="1" y2="0"><stop offset="0" stop-color="#18231f"/><stop offset="0.22" stop-color="#2f3d39"/><stop offset="0.42" stop-color="#374643"/><stop offset="0.56" stop-color="#222d2a"/><stop offset="0.7" stop-color="#0c1311"/><stop offset="1" stop-color="#060a09"/></linearGradient>
<linearGradient id="ftop" x1="0" y1="0" x2="0" y2="1"><stop offset="0" stop-color="#3f6373" stop-opacity="0.6"/><stop offset="0.55" stop-color="#35525c" stop-opacity="0.25"/><stop offset="1" stop-color="#2a3d40" stop-opacity="0"/></linearGradient>
<radialGradient id="fr" cx="0.5" cy="0.5" r="0.5"><stop offset="0" stop-color="#030605" stop-opacity="0.85"/><stop offset="0.55" stop-color="#030605" stop-opacity="0.6"/><stop offset="1" stop-color="#030605" stop-opacity="0"/></radialGradient>
<linearGradient id="fbot" x1="0" y1="0" x2="0" y2="1"><stop offset="0" stop-color="#050a09" stop-opacity="0"/><stop offset="1" stop-color="#050a09" stop-opacity="0.7"/></linearGradient>
<filter id="fn" x="0" y="0" width="1" height="1"><feTurbulence type="fractalNoise" baseFrequency="0.07" numOctaves="4" seed="11"/><feColorMatrix type="matrix" values="0 0 0 0 0.02  0 0 0 0 0.05  0 0 0 0 0.05  0 0 0 -2.6 1.45"/></filter>
<filter id="fbl" x="-0.5" y="-0.2" width="2" height="1.4"><feGaussianBlur stdDeviation="4"/></filter></defs>
<rect width="175" height="126" fill="url(#fb)"/>
<rect width="175" height="62" fill="url(#ftop)"/>
<polygon points="58,0 100,0 84,126 26,126" fill="#8ea3a0" opacity="0.16" filter="url(#fbl)"/>
<rect y="55" width="175" height="71" fill="url(#fbot)"/>
<rect width="175" height="126" filter="url(#fn)" opacity="0.7"/>
<ellipse cx="158" cy="98" rx="78" ry="86" fill="url(#fr)"/>
<rect x="-4" y="48" width="20" height="80" fill="#0a1210" opacity="0.8" filter="url(#fbl)"/>
<rect x="96" y="-5" width="12" height="70" fill="#15232a" opacity="0.55" filter="url(#fbl)"/>
<rect x="0" y="125" width="175" height="35" fill="#010202"/>
</svg><div class="b" style="left:1222px;top:519px;width:20px;height:20px;background:#18a283;"></div><div class="b" style="left:1258px;top:507px;width:175px;height:160px;border-radius:6px;background:#fff;overflow:hidden;"><div class="b" style="left:0;top:0;width:175px;height:125px;background:linear-gradient(193deg,#ffffff 0%,#f6fbff 14%,#d4ecfb 33%,#a9d8f8 50%,#8fccf5 64%,#b5dcf8 74%,#f1f8fe 86%,#ffffff 94%);"></div></div><div class="b" style="left:1401px;top:519px;width:20px;height:20px;background:#0f7be0;"></div><svg class="ic" style="left:721px;top:671px;border-radius:6px;overflow:hidden" width="175" height="160" viewBox="0 0 175 160">
<rect width="175" height="160" fill="#ffffff"/>
<path d="M60 0 H175 V10 C160 6 150 12 138 11 C126 10 118 4 104 7 C92 9 84 2 60 0Z" fill="#b9cfe9"/>
<path d="M75 0 H175 V5 C150 2 140 8 125 6 C110 4 100 1 75 0Z" fill="#d7e3f3"/>
<path d="M20 20 C60 30 120 40 175 75 V125 H10 C5 90 10 50 20 20Z" fill="#fafcfe"/>
<path d="M40 60 C80 50 140 60 175 90 V125 H30Z" fill="#fdfeff"/>
<path d="M160 57 L175 100 V112 L144 108Z" fill="#edf3fa"/>
<rect x="128" y="98" width="6" height="8" fill="#d6e2f0"/>
</svg><div class="b" style="left:864px;top:683px;width:20px;height:20px;background:#4a68c0;"></div><svg class="ic" style="left:900px;top:671px;border-radius:6px;overflow:hidden" width="175" height="160" viewBox="0 0 175 160">
<defs><linearGradient id="gl" x1="0" y1="0" x2="0" y2="1"><stop offset="0" stop-color="#d4f6d2"/><stop offset="1" stop-color="#ffffff"/></linearGradient></defs>
<rect width="175" height="160" fill="#d8f8d6"/>
<path d="M95 0 H175 V7 C150 3 120 6 95 0Z" fill="#a9e4ee"/>
<path d="M0 10 C50 0 120 10 175 30 V60 C120 30 60 25 0 40Z" fill="#cdf3ca"/>
<path d="M0 60 C40 45 90 40 175 70 V125 H0Z" fill="#d0f4cd"/>
<path d="M20 100 C60 55 120 45 175 60 V125 H20Z" fill="#c9f0c6"/>
<path d="M0 95 C50 70 80 80 120 110 V125 H0Z" fill="#d6f7d3" opacity="0.8"/>
<polygon points="158,58 174,106 142,106" fill="#86dc8c"/>
<rect x="156.500" y="106" width="3" height="9" fill="#86dc8c"/>
<rect x="118" y="0" width="4" height="8" fill="#79c9a8"/><rect x="127" y="0" width="5" height="9" fill="#7ecf92"/><rect x="146" y="1" width="3" height="7" fill="#7ecf92"/>
<rect x="20" y="54" width="8" height="4" fill="#f3e5a8"/><rect x="108" y="51" width="8" height="4" fill="#f0ecb4"/>
<rect x="78" y="103" width="40" height="4" fill="#e6eaa8" opacity="0.8"/><rect x="112" y="100" width="6" height="6" fill="#f4d486"/>
<rect x="0" y="118" width="175" height="8" fill="url(#gl)"/>
<rect x="0" y="125" width="175" height="35" fill="#ffffff"/>
</svg><div class="b" style="left:1043px;top:683px;width:20px;height:20px;background:#06c168;"></div>
<div class="t" style="top:560px;font-size:14px;line-height:20px;color:#fff;font-weight:700;left:608.6px;width:400px;text-align:center;"><span>Mica</span></div>
<div class="t" style="top:640px;font-size:14px;line-height:20px;color:#000;letter-spacing:-0.080px;left:786.6px;">Default</div>
<div class="t" style="top:640px;font-size:14px;line-height:20px;color:#fff;letter-spacing:0.252px;left:967px;">Nighty</div>
<div class="t" style="top:640px;font-size:14px;line-height:20px;color:#fff;letter-spacing:-0.365px;left:1148.2px;">Forest</div>
<div class="t" style="top:640px;font-size:14px;line-height:20px;color:#000;letter-spacing:-0.182px;left:1324px;">Clouds</div>
<div class="t" style="top:804px;font-size:14px;line-height:20px;color:#000;letter-spacing:-0.266px;left:777.4px;">Snowflake</div>
<div class="t" style="top:804px;font-size:14px;line-height:20px;color:#000;letter-spacing:-0.417px;left:965.2px;">Garden</div>
<div class="b" style="left:663px;top:861px;width:898px;height:287px;border-radius:4px;background:rgba(255,255,255,0.05);"></div>
<svg class="ic" style="left:680.5px;top:886.4px;color:#fff" width="22" height="17" viewBox="0 0 22 17"><path d="M15 4.700V3.400a2.400 2.400 0 0 0-2.400-2.400H3.400A2.400 2.400 0 0 0 1 3.400v10a2.400 2.400 0 0 0 2.400 2.400h14.700M6.600 15.800V7.500a2.200 2.200 0 0 1 2.200-2.200h6.600a2.200 2.200 0 0 1 2.200 2.200v.6M14.500 8.200h3.600a2.100 2.100 0 0 1 2.100 2.100v3.400a2.100 2.100 0 0 1-2.100 2.100h-3.600a2.100 2.100 0 0 1-2.100-2.100v-3.400a2.100 2.100 0 0 1 2.100-2.100z" fill="none" stroke="currentColor" stroke-width="1.35" stroke-linecap="round" stroke-linejoin="round"/></svg>
<div class="t" style="top:877px;font-size:14px;line-height:20px;color:#fff;letter-spacing:-0.052px;left:721px;">Mail spacing</div>
<div class="t" style="top:897px;font-size:12px;line-height:17px;color:#d4d5d9;letter-spacing:0.006px;left:721px;">Adjust the spacing for listing mails.</div>
<svg class="ic" style="left:1530px;top:887.5px;color:#fff;opacity:1" width="14" height="14" viewBox="0 0 20 20"><path d="M3 13L10 6l7 7" fill="none" stroke="currentColor" stroke-width="2.0" stroke-linecap="round" stroke-linejoin="round" /></svg>
<div class="b" style="left:663px;top:928px;width:898px;height:1px;background:rgba(0,0,0,0.28);"></div>
<div class="b" style="left:707px;top:1062px;width:823px;height:77px;border-radius:4px;background:rgba(255,255,255,0.06);"></div>
<div class="b" style="left:707px;top:1080px;width:3px;height:42px;border-radius:1.5px;background:#4cb4f5;"></div>
<div class="b av" style="left:720px;top:952.45px;">CM</div>
<div class="t" style="top:950px;font-size:14px;line-height:20px;color:#fff;font-weight:700;letter-spacing:-0.245px;left:762.1px;">Compact Mode</div>
<div class="t" style="top:969px;font-size:14px;line-height:20px;color:#0c76d0;font-weight:700;letter-spacing:-0.145px;left:762.1px;">Welcome to Wino Mail</div>
<div class="t" style="top:971px;font-size:11px;line-height:16px;color:#d0d1d5;letter-spacing:0.034px;left:1447.3px;">Mon 1:00 AM</div>
<div class="b av" style="left:720px;top:1010.55px;">MM</div>
<div class="t" style="top:998px;font-size:14px;line-height:20px;color:#fff;font-weight:700;letter-spacing:0.032px;left:760.4px;">Medium Mode</div>
<div class="t" style="top:1017px;font-size:14px;line-height:20px;color:#0c76d0;font-weight:700;letter-spacing:-0.160px;left:760.4px;">Welcome to Wino Mail</div>
<div class="t" style="top:1036px;font-size:14px;line-height:20px;color:#dcdde0;letter-spacing:-0.017px;left:760.4px;">Thank you for using Wino Mail.</div>
<div class="t" style="top:1019px;font-size:11px;line-height:16px;color:#d0d1d5;letter-spacing:0.043px;left:1449.3px;">Mon 1:00 AM</div>
<div class="b av" style="left:720px;top:1084.75px;">SM</div>
<div class="t" style="top:1072px;font-size:14px;line-height:20px;color:#fff;font-weight:700;letter-spacing:-0.461px;left:766.1px;">Spacious Mode</div>
<div class="t" style="top:1092px;font-size:14px;line-height:20px;color:#0c76d0;font-weight:700;letter-spacing:-0.140px;left:766.1px;">Welcome to Wino Mail</div>
<div class="t" style="top:1110px;font-size:14px;line-height:20px;color:#dcdde0;letter-spacing:-0.003px;left:766.1px;">Thank you for using Wino Mail.</div>
<div class="t" style="top:1093px;font-size:11px;line-height:16px;color:#d0d1d5;letter-spacing:0.043px;left:1449.3px;">Mon 1:00 AM</div>
<div class="b" style="left:663px;top:1158px;width:898px;height:66px;border-radius:4px;background:rgba(255,255,255,0.05);"></div>
<svg class="ic" style="left:680px;top:1183.4px;color:#fff" width="22" height="17" viewBox="0 0 22 17"><path d="M3.800 1.600h14.400a2.600 2.600 0 0 1 2.600 2.600v8.600a2.600 2.600 0 0 1-2.600 2.600H3.800a2.600 2.600 0 0 1-2.600-2.600V4.200a2.600 2.600 0 0 1 2.600-2.600zM14.300 1.600v13.800M3.600 8.500h8M8.600 5.300l3.200 3.200-3.200 3.200" fill="none" stroke="currentColor" stroke-width="1.35" stroke-linecap="round" stroke-linejoin="round"/></svg>
<div class="t" style="top:1173px;font-size:14px;line-height:20px;color:#fff;letter-spacing:-0.183px;left:721px;">Menu Pane Length</div>
<div class="t" style="top:1193px;font-size:12px;line-height:17px;color:#d4d5d9;letter-spacing:0.004px;left:721px;">Change how big should left menu open when it is expanded.</div>
<div class="b" style="left:1425px;top:1175px;width:120px;height:33px;border-radius:4px;background:rgba(255,255,255,0.055);border-top:1px solid rgba(255,255,255,0.03);"></div>
<div class="t" style="top:1181px;font-size:14px;line-height:20px;color:#fff;letter-spacing:0.034px;left:1437.2px;">Default</div>
<svg class="ic" style="left:1520.1px;top:1186.4px;color:#fff;opacity:1" width="9" height="9" viewBox="0 0 20 20"><path d="M3 7L10 14l7-7" fill="none" stroke="currentColor" stroke-width="2.1" stroke-linecap="round" stroke-linejoin="round" opacity="0.8"/></svg>
</main>
</body></html>
